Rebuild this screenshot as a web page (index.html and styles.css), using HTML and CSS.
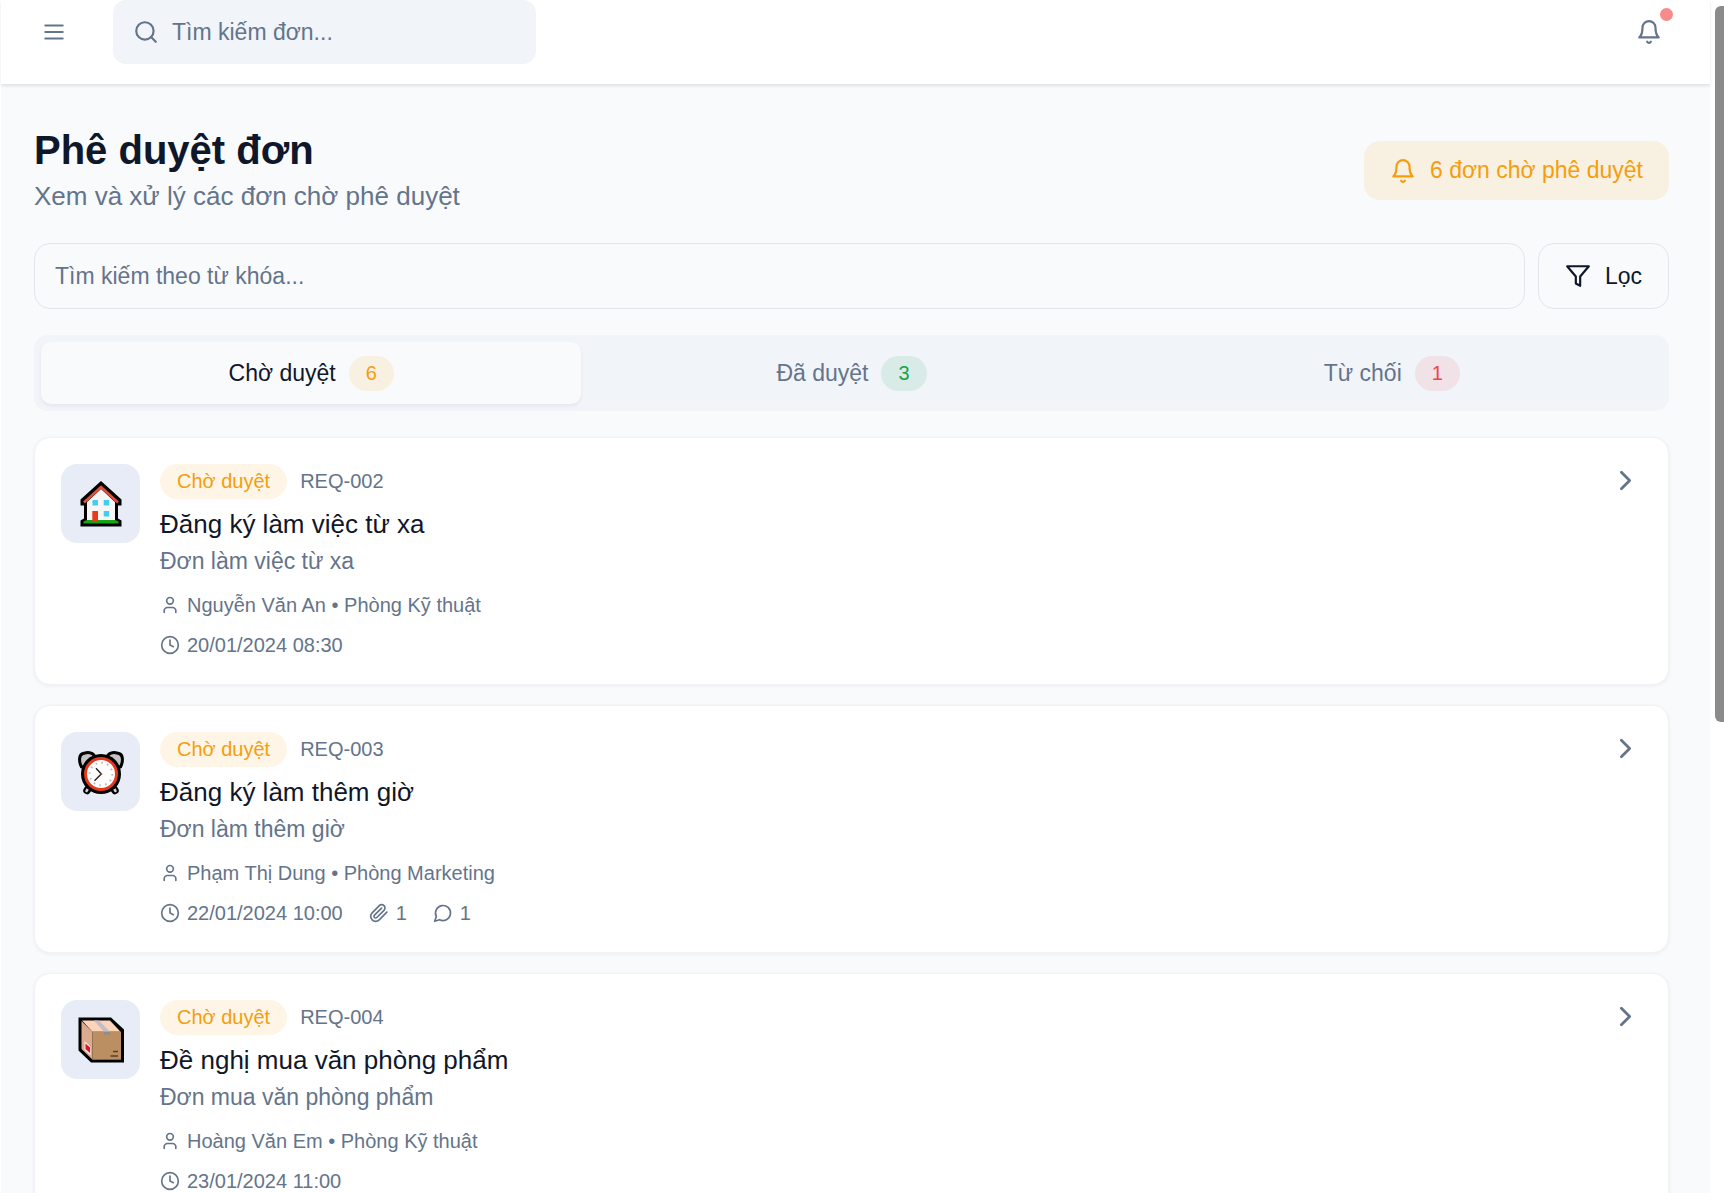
FILE: index.html
```html
<!DOCTYPE html>
<html lang="vi">
<head>
  <meta charset="UTF-8">
  <meta name="viewport" content="width=device-width, initial-scale=1.0">
  <title>Phê duyệt đơn</title>
  <link rel="stylesheet" href="styles.css">
</head>
<body>

  <!-- Shared icons -->
  <svg class="sprite" aria-hidden="true">
    <symbol id="i-menu" viewBox="0 0 24 24"><path d="M4 6h16M4 12h16M4 18h16"/></symbol>
    <symbol id="i-search" viewBox="0 0 24 24"><circle cx="11" cy="11" r="8"/><path d="m21 21-4.3-4.3"/></symbol>
    <symbol id="i-bell" viewBox="0 0 24 24"><path d="M6 8a6 6 0 0 1 12 0c0 7 3 9 3 9H3s3-2 3-9"/><path d="M10.3 21a1.94 1.94 0 0 0 3.4 0"/></symbol>
    <symbol id="i-filter" viewBox="0 0 24 24"><path d="M22 3H2l8 9.46V19l4 2v-8.54L22 3z"/></symbol>
    <symbol id="i-chevron" viewBox="0 0 24 24"><path d="m9 18 6-6-6-6"/></symbol>
    <symbol id="i-user" viewBox="0 0 24 24"><path d="M19 21v-2a4 4 0 0 0-4-4H9a4 4 0 0 0-4 4v2"/><circle cx="12" cy="7" r="4"/></symbol>
    <symbol id="i-clock" viewBox="0 0 24 24"><circle cx="12" cy="12" r="10"/><path d="M12 6v6l4 2"/></symbol>
    <symbol id="i-clip" viewBox="0 0 24 24"><path d="m21.44 11.05-9.19 9.19a6 6 0 0 1-8.49-8.49l8.57-8.57A4 4 0 1 1 18 8.84l-8.59 8.57a2 2 0 0 1-2.83-2.83l8.49-8.48"/></symbol>
    <symbol id="i-comment" viewBox="0 0 24 24"><path d="M7.9 20A9 9 0 1 0 4 16.1L2 22Z"/></symbol>
  </svg>

  <div class="app">
    <header class="topbar">
      <button class="icon-btn" type="button" aria-label="Menu"><svg class="icon"><use href="#i-menu"/></svg></button>
      <label class="top-search">
        <svg class="icon"><use href="#i-search"/></svg>
        <input type="text" placeholder="Tìm kiếm đơn..." aria-label="Tìm kiếm đơn">
      </label>
      <button class="icon-btn notify" type="button" aria-label="Thông báo"><svg class="icon"><use href="#i-bell"/></svg><span class="dot"></span></button>
    </header>

    <main class="content">
      <div class="page-head">
        <div>
          <h1>Phê duyệt đơn</h1>
          <p class="subtitle">Xem và xử lý các đơn chờ phê duyệt</p>
        </div>
        <div class="pending"><svg class="icon"><use href="#i-bell"/></svg><span>6 đơn chờ phê duyệt</span></div>
      </div>

      <div class="filters">
        <input class="keyword" type="text" placeholder="Tìm kiếm theo từ khóa..." aria-label="Tìm kiếm theo từ khóa">
        <button class="filter-btn" type="button"><svg class="icon"><use href="#i-filter"/></svg>Lọc</button>
      </div>

      <div class="tabs" role="tablist">
        <button class="tab active" type="button" role="tab" aria-selected="true">Chờ duyệt <span class="count warn">6</span></button>
        <button class="tab" type="button" role="tab" aria-selected="false">Đã duyệt <span class="count ok">3</span></button>
        <button class="tab" type="button" role="tab" aria-selected="false">Từ chối <span class="count bad">1</span></button>
      </div>

      <div class="list">
        <article class="card">
          <div class="card-icon">
            <svg class="picto" viewBox="0 0 44 44">
              <path d="M22 -1 1.500 17.500V23.500H5V36.500L1.500 38.500V44.500H42.500V38.500L39 36.500V23.500H42.500V17.500Z"/>
              <path fill="#f6f6f6" d="M8 20 22 7 36 20V39H8Z"/>
              <path fill="none" stroke="#e2503c" stroke-width="2.500" d="M5 20.500 22 5 39 20.500"/>
              <path fill="#16a316" d="M4.500 39.500 8 38h28l3.500 1.500v2H4.500Z"/>
              <path fill="#45cdf0" d="M13.500 18h5.500v5.500h-5.500zM24.700 18h5.500v5.500h-5.500zM24.700 29h5.500v5.500h-5.500z"/>
              <path fill="#e83a1c" d="M13.300 29h5.700v11h-5.700z"/>
            </svg>
          </div>
          <div class="card-body">
            <div class="card-top"><span class="status">Chờ duyệt</span><span class="code">REQ-002</span></div>
            <h2>Đăng ký làm việc từ xa</h2>
            <p class="desc">Đơn làm việc từ xa</p>
            <div class="meta"><span><svg class="icon small"><use href="#i-user"/></svg>Nguyễn Văn An • Phòng Kỹ thuật</span></div>
            <div class="meta"><span><svg class="icon small"><use href="#i-clock"/></svg>20/01/2024 08:30</span></div>
          </div>
          <svg class="icon chevron"><use href="#i-chevron"/></svg>
        </article>

        <article class="card">
          <div class="card-icon">
            <svg class="picto" viewBox="0 0 44 44">
              <path stroke="#000" stroke-width="7.500" stroke-linecap="round" d="M11 36 8 40.500M33 36 36 40.500"/>
              <path fill="#c4c4c4" stroke="#000" stroke-width="3" stroke-linejoin="round" d="M2.500 17C-.5 11 0 4.500 4 3.500L6 3C10 1.500 15 3.500 16 7L8 17ZM41.500 17C44.500 11 44 4.500 40 3.500L38 3C34 1.500 29 3.500 28 7L36 17Z"/>
              <path stroke="#d5d5d5" stroke-width="2.500" stroke-linecap="round" d="M10 37 7.500 41M34 37 36.500 41"/>
              <circle cx="22" cy="24" r="20"/>
              <circle cx="22" cy="24" r="15.500" fill="#fff" stroke="#e5391d" stroke-width="3"/>
              <circle cx="22" cy="24" r="11.300" fill="none" stroke="#bbb" stroke-width="2" stroke-dasharray="1.600 4.317"/>
              <path fill="none" stroke="#222" stroke-width="1.400" d="M17 18.300 22.300 24 15.500 30.700"/>
              <circle cx="22.300" cy="24" r="1" fill="#e5391d"/>
            </svg>
          </div>
          <div class="card-body">
            <div class="card-top"><span class="status">Chờ duyệt</span><span class="code">REQ-003</span></div>
            <h2>Đăng ký làm thêm giờ</h2>
            <p class="desc">Đơn làm thêm giờ</p>
            <div class="meta"><span><svg class="icon small"><use href="#i-user"/></svg>Phạm Thị Dung • Phòng Marketing</span></div>
            <div class="meta">
              <span><svg class="icon small"><use href="#i-clock"/></svg>22/01/2024 10:00</span>
              <span><svg class="icon small"><use href="#i-clip"/></svg>1</span>
              <span><svg class="icon small"><use href="#i-comment"/></svg>1</span>
            </div>
          </div>
          <svg class="icon chevron"><use href="#i-chevron"/></svg>
        </article>

        <article class="card">
          <div class="card-icon">
            <svg class="picto" viewBox="0 0 44 44">
              <path d="M-.5 -.5H32L45 11.500V44.500H12L-.5 32.500Z"/>
              <path fill="#fcd3bb" d="M3 2.500H31L41.500 13.700H13.300Z"/>
              <path fill="#dcab8d" d="M2.500 3 13.300 13.700V41.500L2.500 31Z"/>
              <path fill="#bb8f62" d="M13.300 13.700H42V41.700H13.300Z"/>
              <path fill="#c5bcc6" d="M15 2.500H20L31 13.700H25Z"/>
              <path fill="#8f8c8c" d="M25 13.700H31V16.500H25Z"/>
              <path fill="#f7e9e4" d="M5.500 23 11.500 28.500V37.500L5.500 32Z"/>
              <path fill="#d9152f" d="M6.500 25.500 11 29.500V35L6.500 31Z"/>
              <path stroke="#56402c" stroke-width="1.500" d="M34 33.500H39M31.500 38H39"/>
            </svg>
          </div>
          <div class="card-body">
            <div class="card-top"><span class="status">Chờ duyệt</span><span class="code">REQ-004</span></div>
            <h2>Đề nghị mua văn phòng phẩm</h2>
            <p class="desc">Đơn mua văn phòng phẩm</p>
            <div class="meta"><span><svg class="icon small"><use href="#i-user"/></svg>Hoàng Văn Em • Phòng Kỹ thuật</span></div>
            <div class="meta"><span><svg class="icon small"><use href="#i-clock"/></svg>23/01/2024 11:00</span></div>
          </div>
          <svg class="icon chevron"><use href="#i-chevron"/></svg>
        </article>
      </div>
    </main>
  </div>

  <div class="scroll-thumb" aria-hidden="true"></div>
</body>
</html>
```
FILE: styles.css
```css
* {
  box-sizing: border-box;
}

body {
  margin: 0;
  font-family: "Liberation Sans", Arial, sans-serif;
  font-size: 23px;
  color: #0f172a;
  background: #fff;
}

h1, h2, p {
  margin: 0;
}

button, input {
  font: inherit;
  color: inherit;
  border: none;
  background: none;
}

input::placeholder {
  color: #64748b;
  opacity: 1;
}

.sprite {
  position: absolute;
  width: 0;
  height: 0;
}

.icon {
  width: 26px;
  height: 26px;
  flex-shrink: 0;
  fill: none;
  stroke: currentColor;
  stroke-width: 2;
  stroke-linecap: round;
  stroke-linejoin: round;
}

.icon.small {
  width: 20px;
  height: 20px;
}

.app {
  margin-left: 1px;
  margin-right: 14px;
  background: #f9fafc;
}

/* Top bar */
.topbar {
  display: flex;
  align-items: center;
  padding: 0 28px 20px 20px;
  background: #fff;
  box-shadow: 0 2px 3px rgba(0, 0, 0, 0.1);
}

.icon-btn {
  display: flex;
  padding: 18px 20px;
  color: #64748b;
  position: relative;
}

.top-search {
  display: flex;
  align-items: center;
  gap: 13px;
  flex: 0 1 423px;
  height: 64px;
  margin-left: 26px;
  padding: 0 20px;
  border-radius: 13px;
  background: #f1f4f9;
  color: #64748b;
}

.top-search input {
  flex: 1;
  min-width: 0;
  padding: 0;
}

.notify {
  margin-left: auto;
}

.dot {
  position: absolute;
  top: 7px;
  right: 9px;
  width: 13px;
  height: 13px;
  border-radius: 50%;
  background: #f58b8b;
}

/* Content */
.content {
  display: flex;
  flex-direction: column;
  gap: 26px;
  padding: 40px 41px 40px 33px;
}

.page-head {
  display: flex;
  justify-content: space-between;
  align-items: center;
}

h1 {
  font-size: 40px;
  line-height: 52px;
}

.subtitle {
  font-size: 26px;
  line-height: 41px;
  color: #64748b;
}

.pending {
  display: flex;
  align-items: center;
  gap: 14px;
  height: 59px;
  padding: 0 26px;
  border-radius: 16px;
  background: #f8f0e1;
  color: #f59e0b;
}

.filters {
  display: flex;
  gap: 13px;
}

.keyword,
.filter-btn {
  height: 66px;
  border: 1px solid #e2e6ec;
  border-radius: 16px;
}

.keyword {
  flex: 1;
  min-width: 0;
  padding: 0 20px;
}

.filter-btn {
  display: flex;
  align-items: center;
  gap: 14px;
  padding: 0 26px;
}

/* Tabs */
.tabs {
  display: grid;
  grid-template-columns: repeat(3, 1fr);
  padding: 7px;
  border-radius: 14px;
  background: #f1f4f9;
}

.tab {
  display: flex;
  align-items: center;
  justify-content: center;
  gap: 13px;
  height: 62px;
  border-radius: 10px;
  color: #64748b;
}

.tab.active {
  color: #0f172a;
  background: #f9fafc;
  box-shadow: 0 2px 4px rgba(0, 0, 0, 0.06);
}

.count {
  padding: 0 17px;
  border-radius: 18px;
  font-size: 20px;
  line-height: 35px;
}

.count.warn {
  color: #f59e0b;
  background: #f8f0e1;
}

.count.ok {
  color: #16a34a;
  background: #d9ebe6;
}

.count.bad {
  color: #ef4444;
  background: #f0e2e7;
}

/* Request cards */
.list {
  display: flex;
  flex-direction: column;
  gap: 20px;
}

.card {
  display: flex;
  align-items: flex-start;
  gap: 20px;
  padding: 26px;
  border: 1px solid #f0f2f5;
  border-radius: 16px;
  background: #fff;
  box-shadow: 0 1px 4px rgba(0, 0, 0, 0.06);
}

.card-icon {
  display: flex;
  align-items: center;
  justify-content: center;
  width: 79px;
  height: 79px;
  border-radius: 16px;
  background: #e7ecf7;
}

.picto {
  width: 44px;
  height: 44px;
  overflow: visible;
}

.card-body {
  flex: 1;
  min-width: 0;
}

.card-top {
  display: flex;
  align-items: center;
  gap: 13px;
  margin-bottom: 5px;
  font-size: 20px;
  line-height: 35px;
}

.status {
  padding: 0 17px;
  border-radius: 18px;
  color: #f59e0b;
  background: #fef5e7;
}

.code {
  color: #64748b;
}

h2 {
  font-size: 26px;
  font-weight: normal;
  line-height: 40px;
}

.desc {
  line-height: 34px;
  color: #64748b;
}

.meta {
  display: flex;
  gap: 26px;
  margin-top: 14px;
  font-size: 20px;
  line-height: 26px;
  color: #64748b;
}

.meta span {
  display: flex;
  align-items: center;
  gap: 7px;
}

.chevron {
  width: 33px;
  height: 33px;
  color: #64748b;
}

.scroll-thumb {
  position: fixed;
  top: 6px;
  right: 0;
  width: 9px;
  height: 60vh;
  border-radius: 6px 0 0 6px;
  background: #8b8b8b;
}
```
